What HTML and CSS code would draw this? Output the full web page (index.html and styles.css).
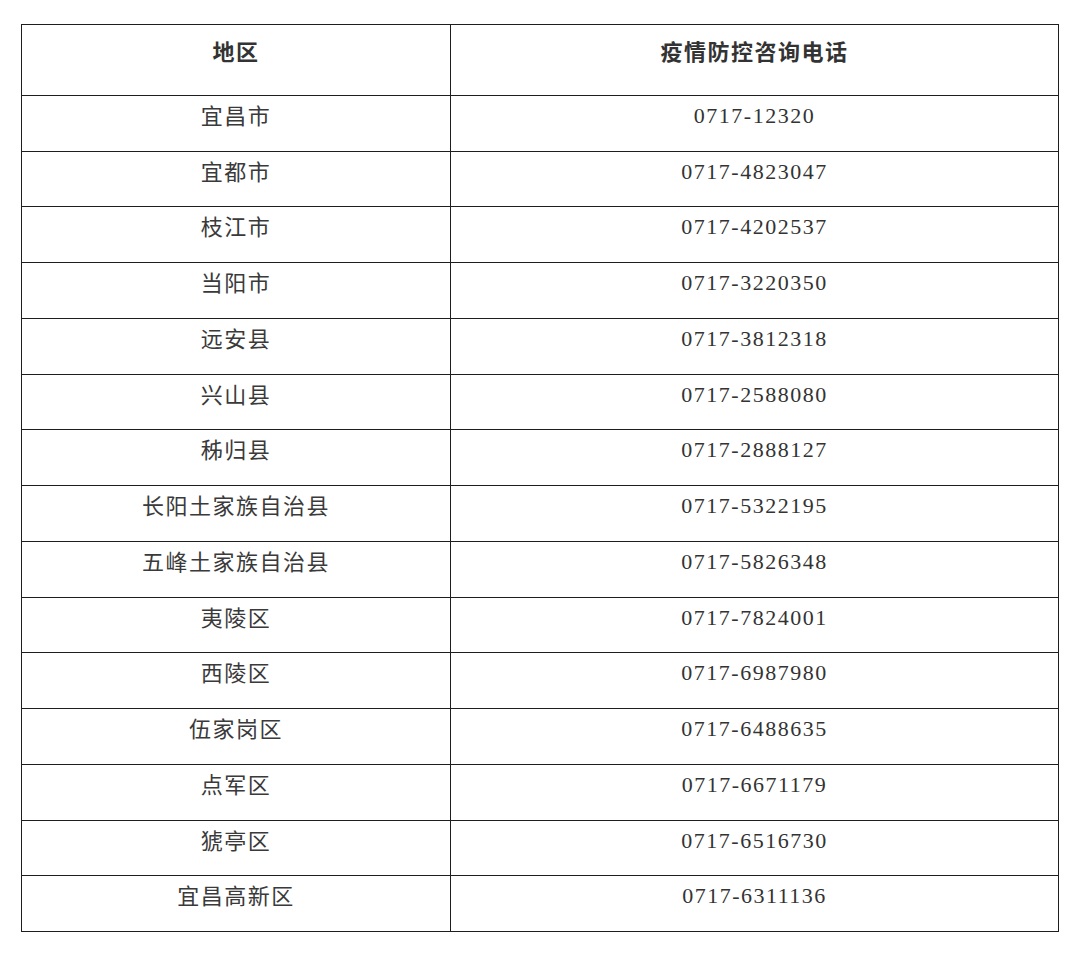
FILE: index.html
```html
<!DOCTYPE html>
<html lang="zh-CN">
<head>
<meta charset="utf-8">
<title>疫情防控咨询电话</title>
<link rel="stylesheet" href="styles.css">
</head>
<body>
<table class="hotline">
  <thead>
    <tr><th class="c-area">地区</th><th class="c-phone">疫情防控咨询电话</th></tr>
  </thead>
  <tbody>
    <tr><td class="c-area">宜昌市</td><td class="c-phone">0717-12320</td></tr>
    <tr><td class="c-area">宜都市</td><td class="c-phone">0717-4823047</td></tr>
    <tr><td class="c-area">枝江市</td><td class="c-phone">0717-4202537</td></tr>
    <tr><td class="c-area">当阳市</td><td class="c-phone">0717-3220350</td></tr>
    <tr><td class="c-area">远安县</td><td class="c-phone">0717-3812318</td></tr>
    <tr><td class="c-area">兴山县</td><td class="c-phone">0717-2588080</td></tr>
    <tr><td class="c-area">秭归县</td><td class="c-phone">0717-2888127</td></tr>
    <tr><td class="c-area">长阳土家族自治县</td><td class="c-phone">0717-5322195</td></tr>
    <tr><td class="c-area">五峰土家族自治县</td><td class="c-phone">0717-5826348</td></tr>
    <tr><td class="c-area">夷陵区</td><td class="c-phone">0717-7824001</td></tr>
    <tr><td class="c-area">西陵区</td><td class="c-phone">0717-6987980</td></tr>
    <tr><td class="c-area">伍家岗区</td><td class="c-phone">0717-6488635</td></tr>
    <tr><td class="c-area">点军区</td><td class="c-phone">0717-6671179</td></tr>
    <tr><td class="c-area">猇亭区</td><td class="c-phone">0717-6516730</td></tr>
    <tr><td class="c-area">宜昌高新区</td><td class="c-phone">0717-6311136</td></tr>
  </tbody>
</table>
</body>
</html>
```
FILE: styles.css
```css
html, body {
  margin: 0;
  padding: 0;
  background: #ffffff;
}

body {
  padding: 24px 0 0 21px;
  font-family: "Noto Sans CJK SC", "Noto Sans", sans-serif;
  color: #333333;
}

.hotline {
  border-collapse: collapse;
  width: 1038px;
  table-layout: fixed;
}

.hotline th,
.hotline td {
  border: 1.5px solid #1e1e1e;
  text-align: center;
  vertical-align: top;
  font-size: 22px;
  letter-spacing: 1.5px;
  line-height: 30px;
  padding: 0;
}

.hotline .c-area {
  width: 428px;
}

.hotline th {
  height: 60px;
  padding-top: 10px;
  font-weight: 700;
  color: #333333;
}

.hotline td {
  height: 51.74px;
  padding-top: 3px;
  color: #3a3a3a;
}

.hotline td.c-phone {
  font-family: "Liberation Serif", "Times New Roman", serif;
  color: #333333;
  padding-top: 5px;
  height: 49.74px;
}
```
